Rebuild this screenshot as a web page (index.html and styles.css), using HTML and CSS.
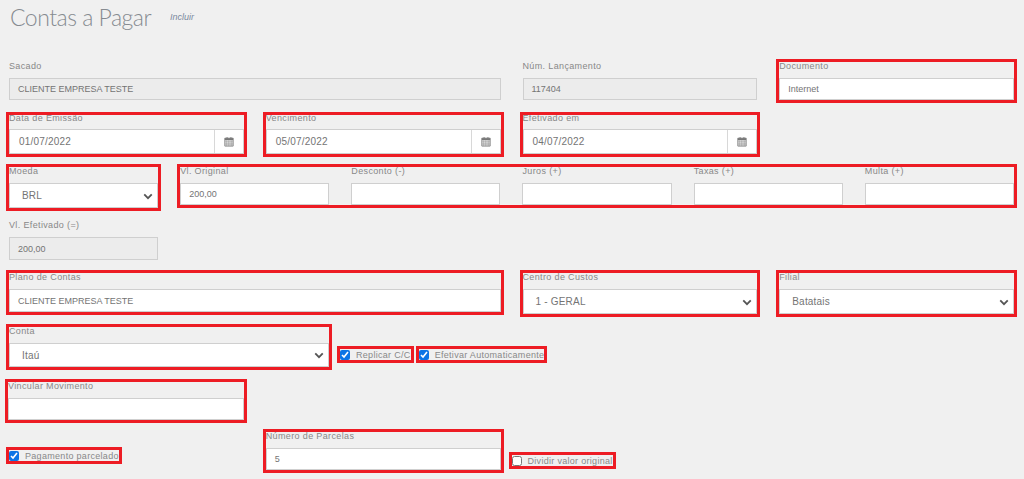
FILE: index.html
```html
<!DOCTYPE html>
<html lang="pt-BR">
<head>
<meta charset="utf-8">
<title>Contas a Pagar</title>
<link rel="stylesheet" href="styles.css">
</head>
<body>
<svg class="sprites" width="0" height="0" aria-hidden="true">
  <symbol id="cal" viewBox="0 0 12 12">
    <path d="M1 2h10v9.500H1z" fill="none" stroke="#777" stroke-width="1"/>
    <path d="M1 2h10v2.500H1z" fill="#777"/>
    <path d="M3 .8h1.400v2H3zM7.600 .8H9v2H7.600z" fill="#777"/>
    <path d="M1 6.300h10M1 8.100h10M1 9.900h10M3.200 4.500v7M5.200 4.500v7M7.200 4.500v7M9.200 4.500v7" stroke="#888" stroke-width=".6" fill="none"/>
  </symbol>
  <symbol id="chev" viewBox="0 0 12 8">
    <path d="M1.500 1.500 6 6l4.500-4.500" fill="none" stroke="#555" stroke-width="2.200"/>
  </symbol>
</svg>
<header class="page-head">
  <h1 class="title">Contas a Pagar</h1>
  <a class="add-link">Incluir</a>
</header>
<main class="form">
  <div class="row grid">
    <div class="field s6"><div class="lbl">Sacado</div><div class="ctl off h22">CLIENTE EMPRESA TESTE</div></div>
    <div class="field s3"><div class="lbl">Núm. Lançamento</div><div class="ctl off h22">117404</div></div>
    <div class="field s3 mark"><div class="lbl">Documento</div><div class="ctl h22">Internet</div></div>
  </div>
  <div class="row grid dates">
    <div class="field s3 mark"><div class="lbl">Data de Emissão</div><div class="ctl date"><span class="val">01/07/2022</span><span class="addon"><svg class="ico"><use href="#cal"/></svg></span></div></div>
    <div class="field s3 mark"><div class="lbl">Vencimento</div><div class="ctl date"><span class="val">05/07/2022</span><span class="addon"><svg class="ico"><use href="#cal"/></svg></span></div></div>
    <div class="field s3 mark"><div class="lbl">Efetivado em</div><div class="ctl date"><span class="val">04/07/2022</span><span class="addon"><svg class="ico"><use href="#cal"/></svg></span></div></div>
  </div>
  <div class="row grid">
    <div class="field s2 mark"><div class="lbl">Moeda</div><div class="ctl sel">BRL<svg class="chev"><use href="#chev"/></svg></div></div>
    <div class="money mark">
      <div class="field"><div class="lbl">Vl. Original</div><div class="ctl h22">200,00</div></div>
      <div class="field"><div class="lbl">Desconto (-)</div><div class="ctl h22"></div></div>
      <div class="field"><div class="lbl">Juros (+)</div><div class="ctl h22"></div></div>
      <div class="field"><div class="lbl">Taxas (+)</div><div class="ctl h22"></div></div>
      <div class="field"><div class="lbl">Multa (+)</div><div class="ctl h22"></div></div>
    </div>
  </div>
  <div class="row grid">
    <div class="field s2"><div class="lbl">Vl. Efetivado (=)</div><div class="ctl off h23">200,00</div></div>
  </div>
  <div class="row grid">
    <div class="field s6 mark"><div class="lbl">Plano de Contas</div><div class="ctl h23">CLIENTE EMPRESA TESTE</div></div>
    <div class="field s3 mark"><div class="lbl">Centro de Custos</div><div class="ctl sel">1 - GERAL<svg class="chev"><use href="#chev"/></svg></div></div>
    <div class="field s3 mark"><div class="lbl">Filial</div><div class="ctl sel">Batatais<svg class="chev"><use href="#chev"/></svg></div></div>
  </div>
  <div class="row inline">
    <div class="field conta mark"><div class="lbl">Conta</div><div class="ctl sel h24">Itaú<svg class="chev"><use href="#chev"/></svg></div></div>
    <label class="check mark top-22"><input type="checkbox" checked>Replicar C/C</label>
    <label class="check mark top-22"><input type="checkbox" checked>Efetivar Automaticamente</label>
  </div>
  <div class="row grid gap-plus">
    <div class="field s3 mark nudge"><div class="lbl">Vincular Movimento</div><div class="ctl h22"></div></div>
  </div>
  <div class="row grid gap-minus">
    <div class="s3 slot"><label class="check mark top-18"><input type="checkbox" checked>Pagamento parcelado</label></div>
    <div class="field s3 mark"><div class="lbl">Número de Parcelas</div><div class="ctl h22">5</div></div>
    <div class="s3 slot pull"><label class="check mark top-23"><input type="checkbox">Dividir valor original</label></div>
  </div>
</main>
</body>
</html>
```

FILE: styles.css
```css
* { box-sizing: border-box; }
html, body { height: 100%; }
body {
  margin: 0;
  background: #f0f0f0;
  color: #777;
  font-family: "Liberation Sans", Arial, sans-serif;
  font-size: 9px;
  overflow: hidden;
}
.sprites { position: absolute; }
.page-head {
  display: flex;
  align-items: flex-start;
  height: 62px;
  padding: 2px 0 0 10px;
}
.title {
  margin: 0;
  font-family: Lato, sans-serif;
  font-weight: 300;
  font-size: 23px;
  line-height: 30px;
  letter-spacing: -.5px;
  color: #868b91;
}
.add-link {
  margin: 10px 0 0 19px;
  font-size: 9px;
  line-height: 10px;
  font-style: italic;
  color: #7c8ba0;
}
.form {
  display: flex;
  flex-direction: column;
  gap: 13px;
  padding: 0 10px 0 9px;
}
.grid {
  display: grid;
  grid-template-columns: repeat(12, 1fr);
  column-gap: 22px;
  align-items: start;
}
.inline { display: flex; align-items: flex-start; gap: 8px; }
.dates { margin-top: 2px; }
.dates .lbl { height: 14px; line-height: 6px; }
.gap-plus { margin-top: 2px; }
.gap-minus { margin-top: -1px; }
.s2 { grid-column: span 2; }
.s3 { grid-column: span 3; }
.s6 { grid-column: span 6; }
.conta { flex: 0 0 320px; margin-right: 3px; }
.nudge { margin-left: -1px; }
.money {
  grid-column: span 10;
  display: grid;
  grid-template-columns: repeat(5, 1fr);
  column-gap: 22px;
}
.mark { outline: 3px solid #ed1c24; }
.lbl {
  height: 16px;
  font-size: 9px;
  line-height: 8px;
  letter-spacing: .36px;
  color: #888;
  white-space: nowrap;
}
.ctl {
  position: relative;
  display: flex;
  align-items: center;
  height: 25px;
  padding: 0 8px;
  background: #fff;
  border: 1px solid #cfcfcf;
  font-size: 9px;
  color: #747474;
  white-space: nowrap;
}
.h22 { height: 22px; }
.h23 { height: 23px; }
.h24 { height: 24px; }
.off { background: #ececec; }
.date { padding: 0; font-size: 10px; letter-spacing: .2px; }
.val { flex: 1; padding-left: 9px; }
.addon {
  display: flex;
  align-items: center;
  justify-content: center;
  flex: 0 0 29px;
  height: 100%;
  border-left: 1px solid #d8d8d8;
}
.ico { width: 10px; height: 11px; }
.sel { padding-left: 12px; font-size: 10px; letter-spacing: .2px; }
.chev {
  position: absolute;
  right: 4px;
  top: 50%;
  width: 10px;
  height: 7px;
  margin-top: -3px;
}
.check {
  display: inline-flex;
  align-items: center;
  height: 11px;
  gap: 6px;
  font-size: 9px;
  letter-spacing: .3px;
  color: #888;
  white-space: nowrap;
}
.check input {
  width: 10px;
  height: 10px;
  margin: 0;
  accent-color: #0b74e5;
}
.top-22 { margin-top: 22px; }
.top-18 { margin-top: 18px; }
.top-23 { margin-top: 23px; }
.pull { margin-left: -11px; }
```
